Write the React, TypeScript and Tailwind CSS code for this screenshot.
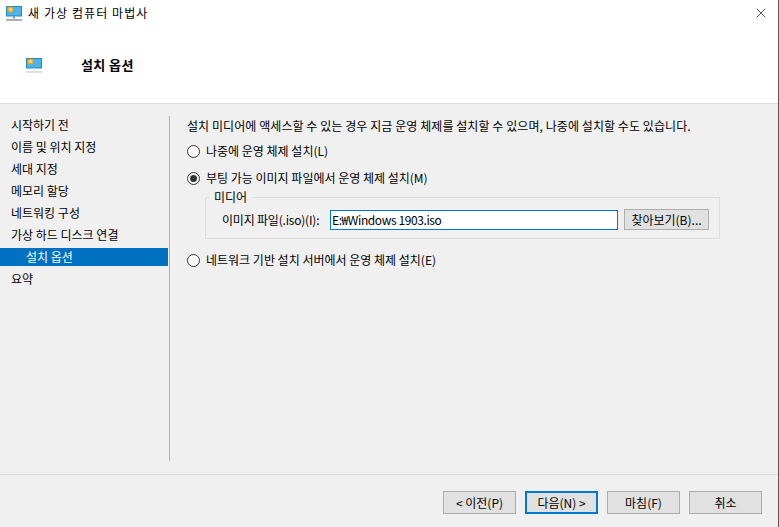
import { X } from 'lucide-react';

const font = { fontFamily: '"Noto Sans CJK KR", "Liberation Sans", sans-serif' };

const steps = [
  '시작하기 전',
  '이름 및 위치 지정',
  '세대 지정',
  '메모리 할당',
  '네트워킹 구성',
  '가상 하드 디스크 연결',
  '설치 옵션',
  '요약',
];

const MonitorIcon = ({ stand }: { stand?: boolean }) => (
  <svg width="16" height="15" viewBox="0 0 16 15" className="shrink-0">
    <rect x="0" y="0" width="16" height="10.5" fill="#1d8ac9" />
    <rect x="1" y="1" width="14" height="8.5" fill="#4fb3e8" />
    <path
      d="M4.5 0 L5.3 1.3 L7 .8 L6.7 2.4 L8.2 3.3 L6.9 4.2 L7.2 5.9 L5.5 5.5 L4.5 6.9 L3.5 5.5 L1.8 5.9 L2.1 4.2 L.8 3.3 L2.3 2.4 L2 .8 L3.7 1.3 Z"
      fill="#f5a623"
    />
    <circle cx="4.5" cy="3.4" r="1.7" fill="#fcdc7a" />
    <rect x="7" y="10.5" width="2" height="2" fill={stand ? '#7f8a92' : '#dfe3e5'} />
    <rect x="0" y="13" width="16" height="2" fill={stand ? '#a9b2b8' : '#dcdfe1'} />
  </svg>
);

const Radio = ({ checked }: { checked?: boolean }) => (
  <span className="flex h-[13px] w-[13px] shrink-0 items-center justify-center rounded-full border border-[#333333] bg-white">
    {checked && <span className="h-[7px] w-[7px] rounded-full bg-[#333333]" />}
  </span>
);

const WizardButton = ({ label, active }: { label: string; active?: boolean }) => (
  <div
    className={`flex h-[23px] w-[73px] items-center justify-center bg-[#e1e1e1] text-[12px] leading-none text-black ${
      active ? 'border-2 border-[#0078d7]' : 'border border-[#adadad]'
    }`}
  >
    {label}
  </div>
);

export default function App() {
  return (
    <div style={font} className="flex h-[527px] w-[779px] flex-col overflow-hidden border-r border-[#5a5a5a] bg-[#f0f0f0] text-[12px] text-black">
      {/* Header */}
      <div className="h-[104px] shrink-0 border-b border-[#dcdcdc] bg-white">
        <div className="flex h-[25px] items-center pl-[6px]">
          <span className="mt-[2px]">
            <MonitorIcon stand />
          </span>
          <span className="ml-[6px] tracking-[1.08px]">새 가상 컴퓨터 마법사</span>
          <X size={16} strokeWidth={1} className="ml-auto mr-[9px]" />
        </div>
        <div className="mt-[32px] flex items-center pl-[26px]">
          <MonitorIcon />
          <span className="-mt-[2px] ml-[39px] text-[13px] font-bold tracking-[0.4px]">설치 옵션</span>
        </div>
      </div>

      {/* Body */}
      <div className="flex flex-1 pt-[12px]">
        <div className="h-[345px] w-[170px] shrink-0 border-r border-[#b0b0b0]">
          <ul className="-mt-[2px] flex flex-col">
            {steps.map((step, i) => (
              <li
                key={step}
                className={`flex h-[22px] items-center ${i === 6 ? 'text-white' : 'pl-[11px]'}`}
              >
                {i === 6 ? (
                  <span className="flex h-[18px] w-[168px] items-center bg-[#0070c0] pl-[26px]">{step}</span>
                ) : (
                  step
                )}
              </li>
            ))}
          </ul>
        </div>

        <div className="flex-1 pl-[17px] pt-[1px]">
          <p className="h-[18px] leading-[18px] tracking-[0.07px]">
            설치 미디어에 액세스할 수 있는 경우 지금 운영 체제를 설치할 수 있으며, 나중에 설치할 수도 있습니다.
          </p>
          <label className="mt-[7px] flex h-[18px] items-center gap-[6px]">
            <Radio />
            나중에 운영 체제 설치(L)
          </label>
          <label className="mt-[9px] flex h-[18px] items-center gap-[6px]">
            <Radio checked />
            부팅 가능 이미지 파일에서 운영 체제 설치(M)
          </label>

          <fieldset className="ml-[18px] mt-[3px] h-[49px] w-[515px] border border-[#dcdcdc]">
            <legend className="ml-[3px] px-[5px] text-[12px] leading-[14px]">미디어</legend>
            <div className="mt-[5px] flex items-center pl-[16px]">
              <span className="w-[108px] tracking-[-0.2px]">이미지 파일(.iso)(I):</span>
              <div className="flex h-[20px] w-[288px] items-center border border-[#0078d7] bg-white pl-[1px] tracking-[-0.4px]">
                E:₩Windows 1903.iso
              </div>
              <div className="ml-[6px] flex h-[21px] w-[85px] items-center justify-center border border-[#adadad] bg-[#e1e1e1]">
                찾아보기(B)...
              </div>
            </div>
          </fieldset>

          <label className="mt-[12px] flex h-[18px] items-center gap-[6px]">
            <Radio />
            네트워크 기반 설치 서버에서 운영 체제 설치(E)
          </label>
        </div>
      </div>

      {/* Footer */}
      <div className="flex h-[53px] shrink-0 items-start justify-end gap-[9px] border-t border-[#dcdcdc] pr-[16px] pt-[16px]">
        <WizardButton label="< 이전(P)" />
        <WizardButton label="다음(N) >" active />
        <WizardButton label="마침(F)" />
        <WizardButton label="취소" />
      </div>
    </div>
  );
}
